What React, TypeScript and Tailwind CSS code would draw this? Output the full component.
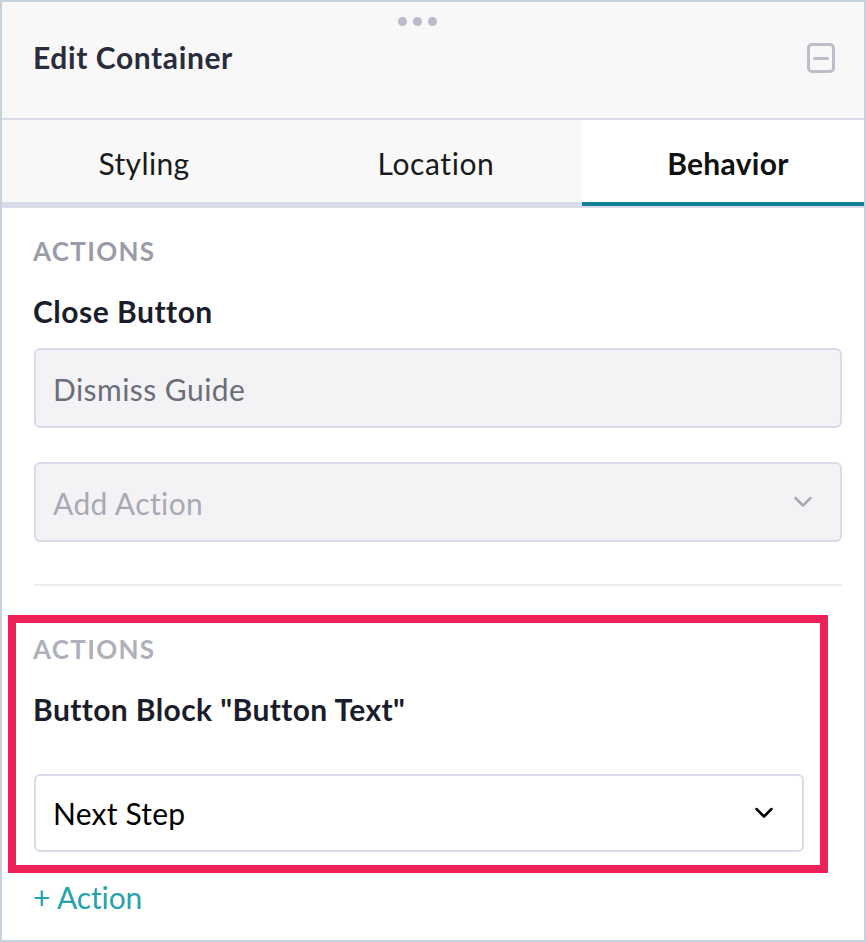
import React from "react";

function Chevron({ className }: { className: string }) {
  return (
    <svg viewBox="0 0 18 12" fill="none" stroke="currentColor" strokeWidth="2.5" strokeLinecap="round" strokeLinejoin="round" className={className}>
      <path d="M1.5 2l7.5 7.5L16.5 2" />
    </svg>
  );
}

function App() {
  return (
    <div className="w-[866px] h-[942px] bg-white border-2 border-[#c5d3df] overflow-hidden font-['Lato','Liberation_Sans',sans-serif]">
      {/* header */}
      <div className="h-[118px] bg-[#f8f8f8] border-b-2 border-[#d8dce8] relative flex items-start justify-between pl-[31px] pr-[29px] pt-[35px]">
        <div className="absolute top-[15px] left-[396px] flex gap-[6px]">
          <span className="w-[9px] h-[9px] rounded-full bg-[#b9bbc8]"></span>
          <span className="w-[9px] h-[9px] rounded-full bg-[#b9bbc8]"></span>
          <span className="w-[9px] h-[9px] rounded-full bg-[#b9bbc8]"></span>
        </div>
        <h1 className="text-[30px] leading-[40px] font-bold tracking-[0.6px] text-[#2a2c3c]">Edit Container</h1>
        <div className="w-[28px] h-[30px] mt-[6px] rounded-[5px] border-[3px] border-[#bcbec9] flex items-center justify-center">
          <span className="w-[16px] h-[3px] rounded-full bg-[#bcbec9]"></span>
        </div>
      </div>

      {/* tabs */}
      <div className="flex h-[88px] bg-[#f8f8f8]">
        <div className="w-[290px] border-b-[6px] border-[#d8dce8] flex items-center justify-center pt-[4px] pr-[6px] text-[30px] tracking-[0.4px] text-[#1a1a1a]">Styling</div>
        <div className="w-[290px] border-b-[6px] border-[#d8dce8] flex items-center justify-center pt-[4px] pr-[2px] text-[30px] tracking-[0.6px] text-[#1a1a1a]">Location</div>
        <div className="flex-1 bg-white border-b-2 border-[#d8dce8] flex flex-col">
          <div className="flex-1 flex items-center justify-center pt-[4px] pl-[10px] text-[30px] font-bold tracking-[0.3px] text-[#111]">Behavior</div>
          <div className="h-[4px] bg-[#14819b]"></div>
        </div>
      </div>

      {/* body */}
      <div className="pl-[32px] pr-[22px] pt-[28px]">
        <div className="-ml-[1px] text-[26px] leading-[30px] font-bold tracking-[1.3px] text-[#9a9ca8]">ACTIONS</div>
        <div className="-ml-[1px] mt-[28px] text-[30px] leading-[34px] font-bold tracking-[0.5px] text-[#1b1d2b]">Close Button</div>
        <div className="mt-[20px] h-[80px] rounded-[6px] border-2 border-[#d8dce8] bg-[#f3f3f6] flex items-center pl-[17px] pr-[18px] pt-[2px] text-[30px] tracking-[0.45px] text-[#6c6d78]">Dismiss Guide</div>
        <div className="mt-[34px] h-[80px] rounded-[6px] border-2 border-[#d8dce8] bg-[#f3f3f6] flex items-center justify-between pl-[17px] pr-[28px] text-[30px] tracking-[0.4px] text-[#a8a9b4]">
          <span className="pt-[2px]">Add Action</span>
          <Chevron className="w-[18px] h-[12px] text-[#a8a9b4]" />
        </div>
        <div className="mt-[42px] h-[2px] bg-[#eceef2]"></div>
      </div>

      {/* highlighted block */}
      <div className="mt-[29px] ml-[6px] w-[820px] h-[258px] border-[8px] border-[#ee2259] pl-[17px] pr-[16px] pt-[11px]">
        <div className="text-[26px] leading-[30px] font-bold tracking-[1.3px] text-[#afb0ba]">ACTIONS</div>
        <div className="mt-[28px] text-[30px] leading-[34px] font-bold tracking-[0.4px] text-[#1b1d2b]">Button Block "Button Text"</div>
        <div className="ml-[1px] mt-[48px] h-[78px] rounded-[6px] border-2 border-[#d8dce8] bg-white flex items-center justify-between pl-[17px] pr-[29px] text-[30px] tracking-[0.2px] text-black">
          <span>Next Step</span>
          <Chevron className="w-[18px] h-[12px] text-black" />
        </div>
      </div>

      <div className="pl-[31px] mt-[6px] text-[30px] leading-[36px] tracking-[-0.1px] text-[#26a2ac]">+ Action</div>
    </div>
  );
}

export default App;
